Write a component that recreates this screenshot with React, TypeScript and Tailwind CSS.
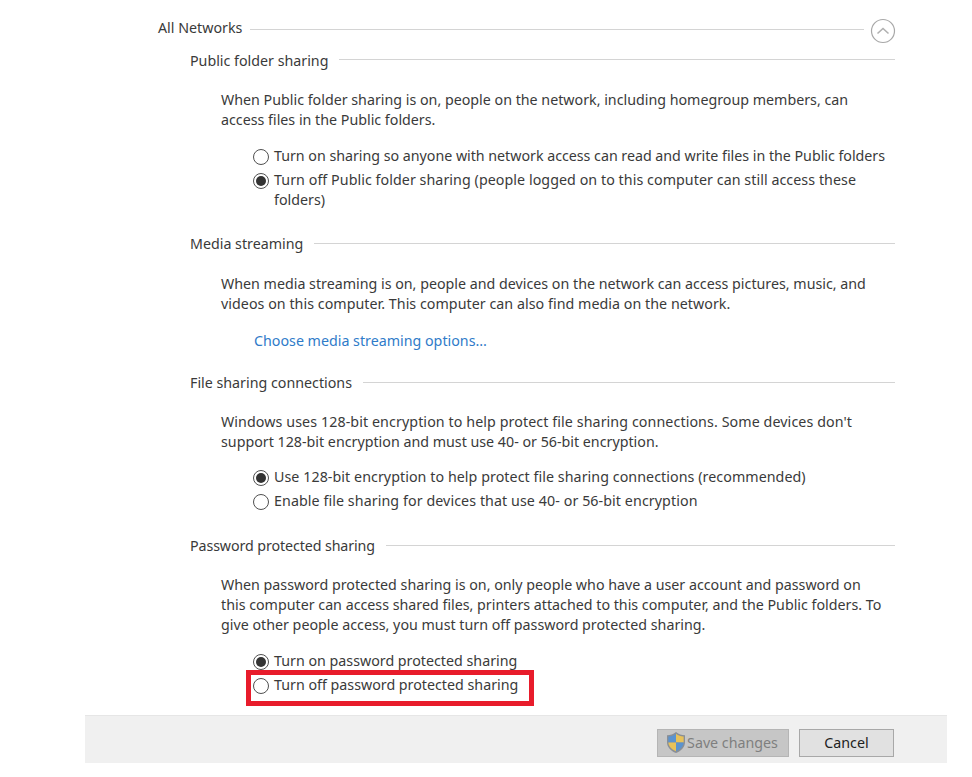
const font = "font-['Noto_Sans','Open_Sans',sans-serif]";

function Radio({ checked }: { checked?: boolean }) {
  return (
    <span className="mt-[3px] flex h-[16px] w-[16px] shrink-0 items-center justify-center rounded-full border border-[#505050] bg-white">
      {checked && <span className="h-[10px] w-[10px] rounded-full bg-[#333333]" />}
    </span>
  );
}

function Option({ checked, children, className = "" }: { checked?: boolean; children: React.ReactNode; className?: string }) {
  return (
    <div className={`flex items-start gap-[5px] pl-[253px] ${className}`}>
      <Radio checked={checked} />
      <div>{children}</div>
    </div>
  );
}

function Heading({ children, className = "", up }: { children: React.ReactNode; className?: string; up?: boolean }) {
  return (
    <div className={`ml-[190px] mr-[77px] flex items-center gap-[11px] ${className}`}>
      <span className="translate-y-px whitespace-nowrap">{children}</span>
      <span className={up ? "mb-[2px] h-px flex-1 bg-[#d4d4d4]" : "h-px flex-1 bg-[#d4d4d4]"} />
    </div>
  );
}

function Para({ children, className = "" }: { children: React.ReactNode; className?: string }) {
  return <p className={`whitespace-nowrap pl-[221px] ${className}`}>{children}</p>;
}

function Shield() {
  return (
    <svg width="18" height="21" viewBox="2 1 16 18" preserveAspectRatio="none" className="-ml-[1px] shrink-0">
      <path d="M10 1 C7.5 3 5 3.6 2 3.8 V9.5 C2 14 5.5 17.2 10 19 C14.5 17.2 18 14 18 9.5 V3.8 C15 3.6 12.5 3 10 1 Z" fill="#8a8f96" />
      <path d="M10 2.4 V10 H3.2 V4.9 C5.8 4.6 8 4 10 2.4 Z" fill="#5b93cf" />
      <path d="M10 2.4 C12 4 14.2 4.6 16.8 4.9 V10 H10 Z" fill="#e8c25a" />
      <path d="M3.2 10 H10 V17.6 C6.2 16 3.4 13.4 3.2 10 Z" fill="#e8c25a" />
      <path d="M10 10 H16.8 C16.6 13.4 13.8 16 10 17.6 Z" fill="#5b93cf" />
    </svg>
  );
}

export default function App() {
  return (
    <div className={`relative h-[777px] w-[972px] overflow-hidden bg-white text-[14.25px] leading-[20px] text-[#3a3a3a] ${font}`}>
      <div className="ml-[158px] mr-[76px] flex items-center pt-[18px]">
        <span className="whitespace-nowrap">All Networks</span>
        <span className="ml-[8px] mt-[2px] h-px flex-1 bg-[#d4d4d4]" />
        <svg width="26" height="26" viewBox="0 0 26 26" className="-my-[3px] ml-[6px] shrink-0 translate-y-[3px]">
          <circle cx="13" cy="13" r="11.5" fill="white" stroke="#a8a8a8" strokeWidth="1.2" />
          <path d="M7.5 15.5 L13 10.5 L18.5 15.5" fill="none" stroke="#b0b0b0" strokeWidth="1.6" />
        </svg>
      </div>

      <Heading up className="mt-[12px]">Public folder sharing</Heading>
      <Para className="mt-[20px]">
        When Public folder sharing is on, people on the network, including homegroup members, can
        <br />
        access files in the Public folders.
      </Para>
      <Option className="mt-[16px]">
        <span className="tracking-[-0.02px]">Turn on sharing so anyone with network access can read and write files in the Public folders</span>
      </Option>
      <Option checked className="mt-[4px]">
        <span className="tracking-[0.06px]">Turn off Public folder sharing (people logged on to this computer can still access these</span>
        <br />
        folders)
      </Option>

      <Heading className="mt-[23px]">Media streaming</Heading>
      <Para className="mt-[21px]">
        When media streaming is on, people and devices on the network can access pictures, music, and
        <br />
        <span className="tracking-[0.04px]">videos on this computer. This computer can also find media on the network.</span>
      </Para>
      <div className="mt-[16px] translate-y-px pl-[254px] text-[#2f7bc9]">Choose media streaming options...</div>

      <Heading className="mt-[22px]">File sharing connections</Heading>
      <Para className="mt-[20px]">
        <span className="tracking-[0.09px]">Windows uses 128-bit encryption to help protect file sharing connections. Some devices don't</span>
        <br />
        support 128-bit encryption and must use 40- or 56-bit encryption.
      </Para>
      <Option checked className="mt-[15px]">
        <span className="tracking-[0.06px]">Use 128-bit encryption to help protect file sharing connections (recommended)</span>
      </Option>
      <Option className="mt-[4px]">
        <span className="tracking-[0.08px]">Enable file sharing for devices that use 40- or 56-bit encryption</span>
      </Option>

      <Heading className="mt-[24px]">
        <span className="tracking-[-0.1px]">Password protected sharing</span>
      </Heading>
      <Para className="mt-[20px]">
        When password protected sharing is on, only people who have a user account and password on
        <br />
        this computer can access shared files, printers attached to this computer, and the Public folders. To
        <br />
        give other people access, you must turn off password protected sharing.
      </Para>
      <Option checked className="mt-[16px]">Turn on password protected sharing</Option>
      <Option className="mt-[4px]">Turn off password protected sharing</Option>

      <div className="ml-[85px] mt-[20px] flex h-[48px] w-[862px] items-center justify-end gap-[10px] border-t border-[#e6e6e6] bg-[#f0f0f0] pr-[53px] pt-[6px]">
        <button className="flex h-[28px] w-[132px] items-center justify-center gap-[2px] border border-[#b5b5b5] bg-[#c6c6c6] text-[#7f7f7f]">
          <Shield />
          Save changes
        </button>
        <button className="h-[28px] w-[95px] border border-[#a8a8a8] bg-[#e1e1e1] text-[#222222]">Cancel</button>
      </div>

      <div className="pointer-events-none absolute left-[246px] top-[670px] h-[36px] w-[288px] border-[5px] border-[#e81c2b]" />
    </div>
  );
}
